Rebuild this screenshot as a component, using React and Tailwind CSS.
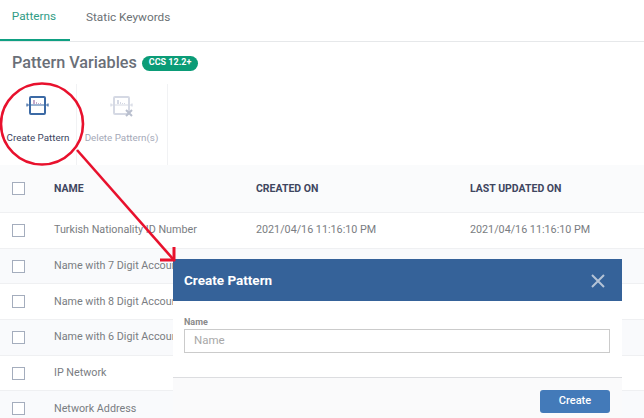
const rows = [
  ["Turkish Nationality ID Number", "2021/04/16 11:16:10 PM", "2021/04/16 11:16:10 PM"],
  ["Name with 7 Digit Account", "", ""],
  ["Name with 8 Digit Account", "", ""],
  ["Name with 6 Digit Account", "", ""],
  ["IP Network", "", ""],
  ["Network Address", "", ""],
];

function PatternIcon({ disabled }) {
  const c = disabled ? "#d5d9e4" : "#3c6aa5";
  return (
    <svg width="24" height="22" viewBox="0 0 24 22" fill="none">
      <rect x="4" y="2" width="15" height="17" rx="1" stroke={c} strokeWidth="2" />
      <path d="M1 10h21M1 8.5v3M22 8.5v3" stroke={c} strokeWidth="1.2" />
      <path d="M7 5h2v4H7zM10 7h1v2h-1zM12 8h1v1h-1zM14 8h1v1h-1z" fill={disabled ? "#d5d9e4" : "#c6a9c9"} />
      {disabled && <path d="M16 15l6 6M22 15l-6 6" stroke="#b9bfce" strokeWidth="2" />}
    </svg>
  );
}

function Check() {
  return <span className="block w-[13px] h-[13px] border border-[#a4adbd] bg-white shrink-0" />;
}

export default function App() {
  return (
    <div className="relative w-[644px] h-[418px] overflow-hidden bg-white font-['Roboto',sans-serif]">
      <div className="flex h-[42px] border-b border-[#e6e8ea] text-[11.8px] text-[#6b7175]">
        <div className="w-[70px] flex items-center justify-center text-[#2f9c85] border-b-2 border-[#0fa082] h-[41px] pb-[5px] pr-[2px]">Patterns</div>
        <div className="ml-4 flex items-center pb-[6px]">Static Keywords</div>
      </div>
      <div className="flex items-center h-[42px] pl-3 gap-[5px]">
        <h1 className="text-[16.2px] font-medium text-[#6a6f78]">Pattern Variables</h1>
        <span className="rounded-full bg-[#0b9c77] text-white text-[9px] font-bold px-[7px] h-[15px] flex items-center">CCS 12.2+</span>
      </div>
      <div className="flex h-[81px]">
        <div className="w-[77px] border-r border-[#f1f2f4] flex flex-col items-center pt-[11px]">
          <PatternIcon />
          <span className="text-[9.8px] text-[#3c4560] mt-[14px] whitespace-nowrap">Create Pattern</span>
        </div>
        <div className="w-[91px] border-r border-[#f1f2f4] flex flex-col items-center pt-[11px] pr-[1px]">
          <PatternIcon disabled />
          <span className="text-[9.8px] text-[#a5a9b8] mt-[14px] whitespace-nowrap">Delete Pattern(s)</span>
        </div>
      </div>
      <div className="flex items-center h-[48px] bg-[#fafbfc] border-b border-[#eff0f2] text-[10.5px] font-bold text-[#3f4660]">
        <div className="w-[54px] pl-3"><Check /></div>
        <div className="w-[202px]">NAME</div>
        <div className="w-[214px]">CREATED ON</div>
        <div>LAST UPDATED ON</div>
      </div>
      {rows.map((r, i) => (
        <div key={r[0]} className={`flex items-center h-[35.7px] border-b border-[#eff0f2] text-[10.75px] text-[#7a7d82] ${i % 2 ? "bg-[#f9fafc]" : "bg-white"}`}>
          <div className="w-[54px] pl-3"><Check /></div>
          <div className="w-[202px] whitespace-nowrap">{r[0]}</div>
          <div className="w-[214px]">{r[1]}</div>
          <div>{r[2]}</div>
        </div>
      ))}

      <div className="absolute left-[173px] top-[259px] w-[449px] h-[159px] flex flex-col bg-white">
        <div className="h-[42px] bg-[#356299] flex items-center justify-between pl-[11px] pr-[17px] shrink-0">
          <span className="text-white text-[13.5px] font-bold">Create Pattern</span>
          <svg width="14" height="14" viewBox="0 0 14 14" className="mt-[2px]"><path d="M1 1l12 12M13 1L1 13" stroke="#b5c3d6" strokeWidth="2" /></svg>
        </div>
        <div className="h-[77px] border-b border-[#dcdde0] pl-[11px] pr-3 pt-[15px] shrink-0">
          <div className="text-[9px] font-bold text-[#8a8a8a] leading-[12px]">Name</div>
          <div className="h-[24px] mt-[1px] border border-[#cbcbcb] flex items-center pl-[9px] text-[11.5px] text-[#a8a8a8]">Name</div>
        </div>
        <div className="flex-1 bg-[#fafafb] flex justify-end pt-[12px] pr-3">
          <button className="w-[70px] h-[23px] rounded-[3px] bg-[#437ab9] text-white text-[11px] font-medium">Create</button>
        </div>
      </div>

      <svg className="absolute left-0 top-0 pointer-events-none" width="644" height="418" fill="none">
        <ellipse cx="42" cy="124" rx="41" ry="40.5" stroke="#e8112d" strokeWidth="2.6" />
        <path d="M77 150L173 259" stroke="#e8112d" strokeWidth="2.6" />
        <path d="M160 260H175M174 247V261" stroke="#e8112d" strokeWidth="3" />
      </svg>
    </div>
  );
}
